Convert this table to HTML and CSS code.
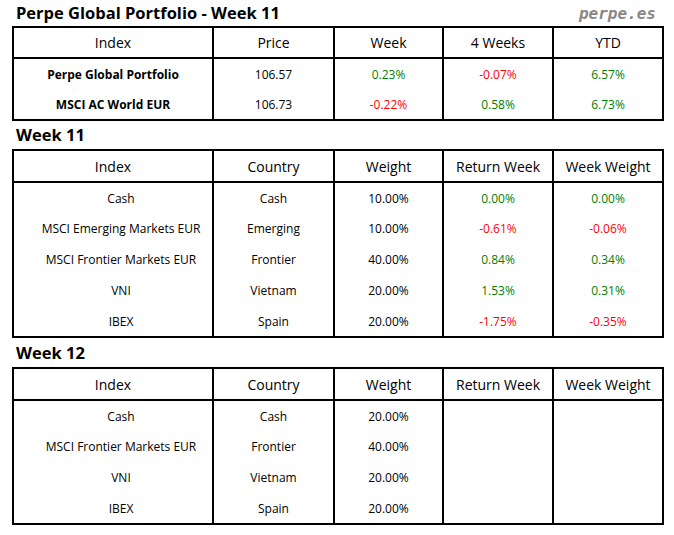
FILE: index.html
```html
<!DOCTYPE html>
<html>
<head>
<meta charset="utf-8">
<link rel="stylesheet" href="styles.css">
</head>
<body>
<div class="page">
  <div class="heading first">
    <h1 class="title">Perpe Global Portfolio - Week 11</h1>
    <span class="brand">perpe.es</span>
  </div>
  <table class="grid">
    <colgroup><col class="c1"><col class="c2"><col class="c3"><col class="c4"><col class="c5"></colgroup>
    <thead>
      <tr><th>Index</th><th>Price</th><th>Week</th><th>4 Weeks</th><th>YTD</th></tr>
    </thead>
    <tbody>
      <tr><td class="name">Perpe Global Portfolio</td><td>106.57</td><td class="pos">0.23%</td><td class="neg">-0.07%</td><td class="pos">6.57%</td></tr>
      <tr><td class="name">MSCI AC World EUR</td><td>106.73</td><td class="neg">-0.22%</td><td class="pos">0.58%</td><td class="pos">6.73%</td></tr>
    </tbody>
  </table>

  <div class="heading"><h2 class="title">Week 11</h2></div>
  <table class="grid alloc">
    <colgroup><col class="c1"><col class="c2"><col class="c3"><col class="c4"><col class="c5"></colgroup>
    <thead>
      <tr><th>Index</th><th>Country</th><th>Weight</th><th>Return Week</th><th>Week Weight</th></tr>
    </thead>
    <tbody>
      <tr><td>Cash</td><td>Cash</td><td>10.00%</td><td class="pos">0.00%</td><td class="pos">0.00%</td></tr>
      <tr><td>MSCI Emerging Markets EUR</td><td>Emerging</td><td>10.00%</td><td class="neg">-0.61%</td><td class="neg">-0.06%</td></tr>
      <tr><td>MSCI Frontier Markets EUR</td><td>Frontier</td><td>40.00%</td><td class="pos">0.84%</td><td class="pos">0.34%</td></tr>
      <tr><td>VNI</td><td>Vietnam</td><td>20.00%</td><td class="pos">1.53%</td><td class="pos">0.31%</td></tr>
      <tr><td>IBEX</td><td>Spain</td><td>20.00%</td><td class="neg">-1.75%</td><td class="neg">-0.35%</td></tr>
    </tbody>
  </table>

  <div class="heading last"><h2 class="title">Week 12</h2></div>
  <table class="grid alloc">
    <colgroup><col class="c1"><col class="c2"><col class="c3"><col class="c4"><col class="c5"></colgroup>
    <thead>
      <tr><th>Index</th><th>Country</th><th>Weight</th><th>Return Week</th><th>Week Weight</th></tr>
    </thead>
    <tbody>
      <tr><td>Cash</td><td>Cash</td><td>20.00%</td><td></td><td></td></tr>
      <tr><td>MSCI Frontier Markets EUR</td><td>Frontier</td><td>40.00%</td><td></td><td></td></tr>
      <tr><td>VNI</td><td>Vietnam</td><td>20.00%</td><td></td><td></td></tr>
      <tr><td>IBEX</td><td>Spain</td><td>20.00%</td><td></td><td></td></tr>
    </tbody>
  </table>
</div>
</body>
</html>
```

FILE: styles.css
```css
html, body {
  margin: 0;
  padding: 0;
  background: #ffffff;
}
body {
  font-family: "Open Sans", "DejaVu Sans", sans-serif;
  color: #000;
}
.page {
  padding: 0 11px 0 12px;
  width: 651px;
}
.heading {
  display: flex;
  align-items: center;
  justify-content: space-between;
  height: 28px;
  padding-left: 4px;
}
.heading.first {
  height: 26px;
}
.heading.last {
  height: 29px;
}
.title {
  margin: 0;
  font-size: 16.5px;
  font-weight: 700;
  line-height: 20px;
}
.brand {
  font-family: "DejaVu Sans Mono", monospace;
  font-weight: 700;
  font-style: italic;
  font-size: 16px;
  color: #8a8784;
  padding-right: 7px;
}
.grid {
  border-collapse: collapse;
  table-layout: fixed;
  width: 652px;
}
.c1 { width: 200px; }
.c2 { width: 121px; }
.c3 { width: 109px; }
.c4 { width: 110px; }
.c5 { width: 110px; }
.grid th, .grid td {
  border-left: 2px solid #000;
  border-right: 2px solid #000;
  text-align: center;
  padding: 0;
  white-space: nowrap;
}
.grid thead tr {
  height: 31px;
}
.alloc thead tr {
  height: 32px;
}
.grid th {
  font-weight: 400;
  font-size: 14px;
  border-top: 2px solid #000;
  border-bottom: 2px solid #000;
}
.grid tbody tr {
  height: 31px;
}
.grid td {
  font-size: 12px;
}
.alloc td:first-child {
  padding-left: 16px;
}
.grid tbody tr:last-child td {
  border-bottom: 2px solid #000;
}
.grid td.name {
  font-weight: 700;
}
.pos { color: #008000; }
.neg { color: #ff0000; }
```
